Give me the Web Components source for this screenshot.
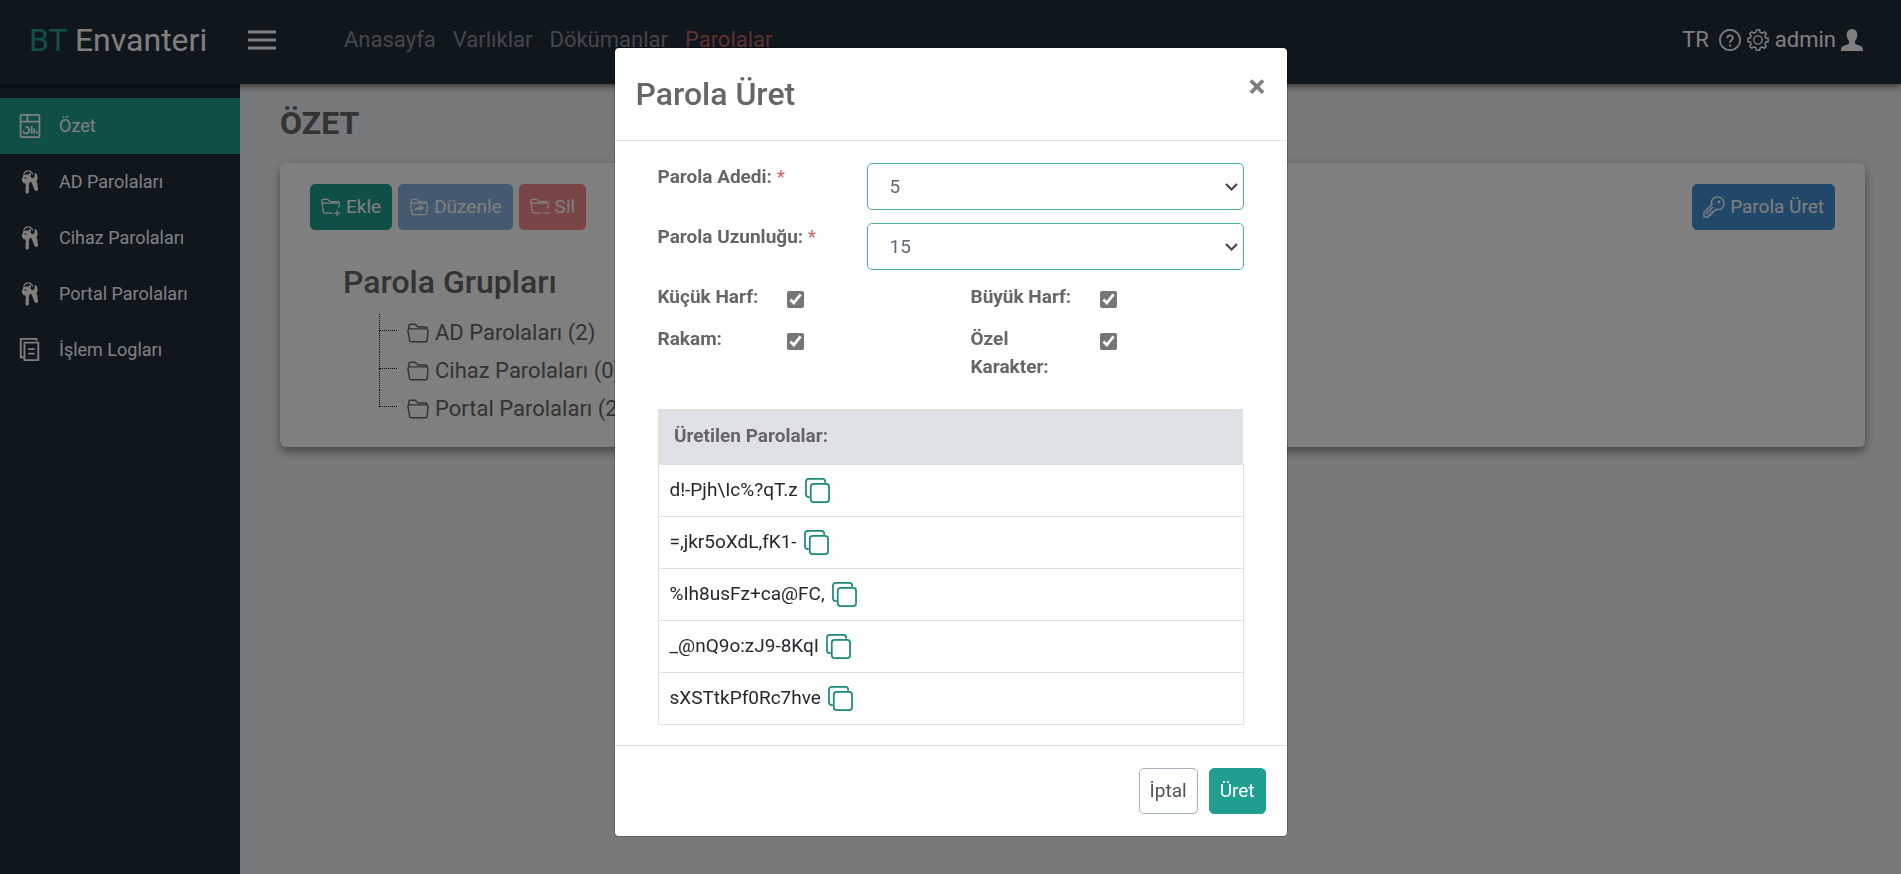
<!DOCTYPE html>
<html lang="tr">
<head>
<meta charset="utf-8">
<title>BT Envanteri</title>
<style>
    body {
        margin: 0;
        font-family: Roboto, "Liberation Sans", sans-serif;
        font-size: 18px;
        line-height: 28px;
        color: #666666;
        background-color: #f0f2f5;
        --green: #209f90;
        --dark: #1e2d38;
    }
</style>
</head>
<body>
<inventory-app></inventory-app>

<script>
// [viewBox, content]
const ICONS = {
    menu: ['0 0 28 20', '<path d="M0 2h28M0 10h28M0 18h28" stroke-width="3"/>'],
    dashboard: ['0 0 24 28', '<rect x="1" y="1" width="22" height="26" rx="1" stroke-width="2"/><path d="M1 9h22M9 1v8M4 20c1 4 7 3 7-1 0-2-1-4-4-4M14 14v9M17 17v6M20 20v3" stroke-width="2"/>'],
    keys: ['0 0 18 26', '<path d="M2 6C3 0 10-1 12 5" stroke-width="1.200"/><path fill="currentColor" stroke="none" fill-rule="evenodd" d="M4 5c3-1 6 2 6 5 0 2-1 4-2 5l-.5 3 1 1-1 1.500.5 3.500-2 2-2-2 .5-9C1 14-1 11 1 8c0-1 1-2 3-3zM4 7.500a1 1 0 1 0 1 1.500z"/><path fill="currentColor" stroke="none" d="M10 3v5l2 1 2-2V3c3 1 4 4 3 7l-1 2 1.500 4-.5 1 1 4-2 2-2-1-3-8-2-2-1 1c2-3 1-6-1-9z"/>'],
    log: ['0 0 22 26', '<path d="M4 21H1V1h17v2M5 5h15v19H5zM9 12h7M9 17h7" stroke-width="2"/>'],
    help: ['0 0 24 24', '<circle cx="12" cy="12" r="11" stroke-width="1.800"/><path d="M9 10c0-4 6-4 6 0 0 2-3 2-3 5M12 17v2" stroke-width="2"/>'],
    gear: ['0 0 24 24', '<circle cx="12" cy="12" r="4.500"/><path d="M10.300 1h3.400l.7 2.700 2.100.9L19 3.200 21 5l-1.500 2.500.9 2.100 2.700.7v3.400l-2.700.7-.9 2.100L21 19l-2 2-2.500-1.500-2.100.9-.7 2.700h-3.400l-.7-2.700-2.100-.9L5 21l-2-2 1.500-2.500-.9-2.100L1 13.700v-3.400l2.600-.7.9-2.100L3 5l2-2 2.500 1.500 2.100-.9z"/>'],
    user: ['0 0 22 22', '<path fill="currentColor" stroke="none" d="M11 0c4.500 0 6 4 5 8-.5 2-1 3-2 4v2c0 1 1 1.500 3 2 4 1 5 2 5 6H0c0-4 1-5 5-6 2-.5 3-1 3-2v-2c-1-1-1.500-2-2-4-1-4 .5-8 5-8z"/>'],
    folderAdd: ['0 0 26 24', '<path d="M15 20H5c-1.500 0-2-1-2-2L1 4c0-1 1-2 2-2h6l3 3h10c1 0 2 1 2 2l-1 6M2 7h20M21 16v8M17 20h8"/>'],
    folderMove: ['0 0 26 24', '<path d="M3 7V4c0-1 1-2 2-2h5l3 3h8c1 0 2 1 2 2v1M4 21L2 9c0-1 1-2 2-2h18c1 0 2 1 2 2l-1 11c0 1-1 2-2 2H6c-1 0-2 0-2-1z"/><path fill="currentColor" stroke="none" d="M14 9l6 4-6 5v-3c-4 0-6 1-7 3 0-4 3-6 7-6z"/>'],
    folderDel: ['0 0 26 24', '<path d="M14 20H5c-1.500 0-2-1-2-2L1 4c0-1 1-2 2-2h6l3 3h10c1 0 2 1 2 2l-1 7M2 7h20M17 20h8"/>'],
    folder: ['0 0 24 21', '<path d="M2 6V3c0-1 1-2 2-2h5l3 3h8c1 0 2 1 2 2M3 19L1 8c0-1 0-2 2-2h18c2 0 2 1 2 2l-1 10c0 1-1 2-2 2H5c-1 0-2 0-2-1z"/>'],
    key: ['0 0 24 24', '<path d="M1 23v-5L9.500 9.500C8 4 12 1 16 1c4 0 7 3 7 7 0 4-4 8-8.500 6.500L12 17h-2v2H8v2H6v2zM3 20l8-8"/><circle cx="17.500" cy="6.500" r="1.500" fill="currentColor" stroke="none"/>'],
    copy: ['0 0 26 26', '<path d="M5 20H4c-2 0-3-1-3-3V4c0-2 1-3 3-3h14c2 0 3 1 3 3v1" stroke-width="1.800"/><rect x="6" y="6" width="19" height="19" rx="3" stroke-width="1.800"/>'],
    arrow: ['0 0 13 13', '<path d="M1 4l5.500 5.500L12 4" stroke-width="2.200"/>']
};

class BaseElement extends HTMLElement {
    constructor() {
        super();
        this.attachShadow({ mode: 'open' });
    }

    connectedCallback() {
        this.shadowRoot.innerHTML = this.render();
    }
}

class UiIcon extends BaseElement {
    render() {
        const [box, content] = ICONS[this.getAttribute('name')];
        return `
            <style>
                :host { display: inline-flex; flex: none; width: 22px; height: 22px; }
                svg { width: 100%; height: 100%; fill: none; stroke: currentColor; stroke-width: 1.6; overflow: visible; }
            </style>
            <svg viewBox="${box}" aria-hidden="true">${content}</svg>
        `;
    }
}

class UiButton extends BaseElement {
    render() {
        return `
            <style>
                :host { display: inline-block; font-size: 19px; }
                button {
                    display: flex;
                    align-items: center;
                    gap: 5px;
                    height: 46px;
                    padding: 0 10px;
                    border: 1px solid var(--border, var(--bg));
                    border-radius: 5px;
                    background-color: var(--bg);
                    color: var(--text, #ffffff);
                    font: inherit;
                    cursor: pointer;
                }
            </style>
            <button type="button"><slot></slot></button>
        `;
    }
}

class AppHeader extends BaseElement {
    render() {
        return `
            <style>
                :host {
                    display: block;
                    position: relative;
                    z-index: 1;
                    background-color: var(--dark);
                    box-shadow: 0 3px 6px rgba(0, 0, 0, 0.5);
                    color: #ffffff;
                    font-size: 22px;
                }
                header { display: flex; align-items: center; height: 80px; padding: 0 38px 4px 29px; }
                a { color: inherit; text-decoration: none; }
                .brand { width: 219px; font-size: 32px; line-height: 40px; }
                .brand span { color: var(--green); }
                button { display: flex; width: 28px; padding: 0; border: none; background: none; color: inherit; cursor: pointer; }
                button ui-icon { width: 28px; height: 20px; }
                nav { display: flex; gap: 17px; flex: 1; margin-left: 68px; color: #8a8d90; }
                nav .active { color: #bd6060; }
                .tools { display: flex; align-items: center; gap: 6px; }
                .tools a { display: flex; align-items: center; gap: 5px; }
                .lang { margin-right: 4px; }
            </style>
            <header>
                <a class="brand" href="#"><span>BT</span> Envanteri</a>
                <button type="button" aria-label="Menü"><ui-icon name="menu"></ui-icon></button>
                <nav>
                    <a href="#">Anasayfa</a>
                    <a href="#">Varlıklar</a>
                    <a href="#">Dökümanlar</a>
                    <a href="#" class="active">Parolalar</a>
                </nav>
                <div class="tools">
                    <a class="lang" href="#">TR</a>
                    <a href="#" aria-label="Yardım"><ui-icon name="help"></ui-icon></a>
                    <a href="#" aria-label="Ayarlar"><ui-icon name="gear"></ui-icon></a>
                    <a href="#">admin <ui-icon name="user"></ui-icon></a>
                </div>
            </header>
        `;
    }
}

class MenuItem extends BaseElement {
    render() {
        return `
            <style>
                :host { display: block; }
                a {
                    display: flex;
                    align-items: center;
                    gap: 17px;
                    height: 56px;
                    padding-left: 18px;
                    color: #ffffff;
                    text-decoration: none;
                }
                ui-icon { width: 24px; height: 24px; }
                :host([active]) { background-color: var(--green); }
            </style>
            <a href="#"><ui-icon name="${this.getAttribute('icon')}"></ui-icon><slot></slot></a>
        `;
    }
}

class AppSidebar extends BaseElement {
    render() {
        return `
            <style>
                :host { display: block; width: 240px; background-color: var(--dark); }
                nav { padding-top: 14px; }
            </style>
            <nav><slot></slot></nav>
        `;
    }
}

class TreeNode extends BaseElement {
    render() {
        return `
            <style>
                :host { display: flex; height: 38px; font-size: 22px; }
                .branch { display: flex; flex-direction: column; width: 18px; margin-right: 10px; }
                .top { height: 16px; border-left: 1px dotted #000000; border-bottom: 1px dotted #000000; }
                .bottom { flex: 1; border-left: 1px dotted #000000; }
                :host(:last-child) .bottom { border: none; }
                a { display: flex; align-items: center; gap: 6px; color: inherit; text-decoration: none; white-space: nowrap; }
            </style>
            <div class="branch"><div class="top"></div><div class="bottom"></div></div>
            <a href="#"><ui-icon name="folder"></ui-icon><slot></slot></a>
        `;
    }
}

class GroupCard extends BaseElement {
    render() {
        return `
            <style>
                :host {
                    display: block;
                    padding: 21px 30px 19px;
                    border-radius: 6px;
                    background-color: #ffffff;
                    box-shadow: 0 5px 10px rgba(0, 0, 0, 0.4);
                }
                .toolbar { display: flex; gap: 6px; }
                .add { --bg: var(--green); }
                .edit { --bg: #8ab5e2; }
                .delete { --bg: #f28b8d; }
                .generate { --bg: #4490d2; margin-left: auto; }
                .toolbar ui-icon { width: 20px; height: 20px; }
                .toolbar .generate ui-icon { width: 22px; height: 22px; }
                .groups { padding: 32px 33px 0; }
                h2 { margin: 0 0 12px; font-size: 32px; line-height: 40px; font-weight: 500; }
                .tree { padding-left: 36px; }
            </style>
            <div class="toolbar">
                <ui-button class="add"><ui-icon name="folderAdd"></ui-icon>Ekle</ui-button>
                <ui-button class="edit"><ui-icon name="folderMove"></ui-icon>Düzenle</ui-button>
                <ui-button class="delete"><ui-icon name="folderDel"></ui-icon>Sil</ui-button>
                <ui-button class="generate"><ui-icon name="key"></ui-icon>Parola Üret</ui-button>
            </div>
            <div class="groups">
                <h2>Parola Grupları</h2>
                <div class="tree">
                    <tree-node>AD Parolaları (2)</tree-node>
                    <tree-node>Cihaz Parolaları (0)</tree-node>
                    <tree-node>Portal Parolaları (2)</tree-node>
                </div>
            </div>
        `;
    }
}

class PasswordDialog extends BaseElement {
    constructor() {
        super();
        this.passwords = ['d!-Pjh\\Ic%?qT.z', '=,jkr5oXdL,fK1-', '%Ih8usFz+ca@FC,', '_@nQ9o:zJ9-8KqI', 'sXSTtkPf0Rc7hve'];
        this.selects = [['count', 'Parola Adedi:', '5'], ['length', 'Parola Uzunluğu:', '15']];
        this.checks = [['lower', 'Küçük Harf:'], ['upper', 'Büyük Harf:'], ['digit', 'Rakam:'], ['special', 'Özel Karakter:']];
    }

    render() {
        return `
            <style>
                :host {
                    display: flex;
                    justify-content: center;
                    align-items: flex-start;
                    position: fixed;
                    inset: 0;
                    z-index: 10;
                    padding-top: 47px;
                    background-color: rgba(0, 0, 0, 0.5);
                    font-size: 19px;
                }
                .modal {
                    box-sizing: border-box;
                    width: 674px;
                    border: 1px solid rgba(0, 0, 0, 0.2);
                    border-radius: 5px;
                    background-color: #ffffff;
                    background-clip: padding-box;
                }
                .head {
                    display: flex;
                    justify-content: space-between;
                    align-items: flex-start;
                    padding: 26px 21px;
                    border-bottom: 1px solid #dee2e6;
                }
                h2 { margin: 0; font-size: 32px; line-height: 40px; font-weight: 500; }
                .close {
                    padding: 0;
                    border: none;
                    background: none;
                    color: #7f7f7f;
                    font: inherit;
                    font-size: 32px;
                    font-weight: 700;
                    line-height: 24px;
                    cursor: pointer;
                }
                .body { padding: 22px 43px 20px; }
                .field { display: grid; grid-template-columns: 209px 1fr; margin-bottom: 13px; }
                label { font-weight: 700; }
                .required { color: #d06060; font-weight: 400; }
                .select { display: grid; align-items: center; color: #5c6873; }
                .select > * { grid-area: 1 / 1; }
                .select ui-icon { width: 13px; height: 13px; margin-right: 6px; justify-self: end; color: #42484e; pointer-events: none; }
                select {
                    appearance: none;
                    box-sizing: border-box;
                    width: 100%;
                    height: 47px;
                    padding: 0 22px;
                    border: 1px solid #4bb2a6;
                    border-radius: 5px;
                    background-color: #ffffff;
                    color: inherit;
                    font: inherit;
                }
                .checks { display: grid; grid-template-columns: 1fr 1fr; gap: 14px 40px; margin-bottom: 28px; }
                .check { display: grid; grid-template-columns: 129px 1fr; align-items: start; }
                .check label { padding-right: 28px; }
                input { width: 17px; height: 17px; margin: 8px 0 0; accent-color: #767676; }
                table { width: 100%; border-collapse: collapse; color: #23282c; }
                th {
                    height: 55px;
                    padding: 0 16px;
                    box-sizing: border-box;
                    background-color: #dee1e6;
                    color: #666666;
                    text-align: left;
                    font-weight: 700;
                }
                td { padding: 0 11px; border: 1px solid #dee1e6; }
                .password { display: flex; align-items: center; gap: 7px; height: 51px; }
                .copy { display: flex; padding: 0; border: none; background: none; color: #1b897c; cursor: pointer; }
                .copy ui-icon { width: 25px; height: 25px; }
                .foot {
                    display: flex;
                    justify-content: flex-end;
                    gap: 11px;
                    padding: 22px 21px;
                    border-top: 1px solid #dee1e6;
                }
                .cancel { --bg: #ffffff; --border: #a4b0bc; --text: #4f5257; }
                .submit { --bg: var(--green); }
            </style>
            <div class="modal" role="dialog" aria-labelledby="title">
                <div class="head">
                    <h2 id="title">Parola Üret</h2>
                    <button class="close" type="button" aria-label="Kapat">×</button>
                </div>
                <div class="body">
                    ${this.selects.map(([id, text, value]) => `
                        <div class="field">
                            <label for="${id}">${text} <span class="required">*</span></label>
                            <div class="select">
                                <select id="${id}"><option>${value}</option></select>
                                <ui-icon name="arrow"></ui-icon>
                            </div>
                        </div>
                    `).join('')}
                    <div class="checks">
                        ${this.checks.map(([id, text]) => `
                            <div class="check">
                                <label for="${id}">${text}</label>
                                <input type="checkbox" id="${id}" checked>
                            </div>
                        `).join('')}
                    </div>
                    <table>
                        <thead><tr><th>Üretilen Parolalar:</th></tr></thead>
                        <tbody>
                            ${this.passwords.map(password => `
                                <tr><td><div class="password">
                                    <span>${password}</span>
                                    <button class="copy" type="button" aria-label="Kopyala"><ui-icon name="copy"></ui-icon></button>
                                </div></td></tr>
                            `).join('')}
                        </tbody>
                    </table>
                </div>
                <div class="foot">
                    <ui-button class="cancel">İptal</ui-button>
                    <ui-button class="submit">Üret</ui-button>
                </div>
            </div>
        `;
    }
}

class InventoryApp extends BaseElement {
    render() {
        return `
            <style>
                :host { display: flex; flex-direction: column; min-height: 100vh; }
                .page { display: flex; flex: 1; }
                main { flex: 1; padding: 19px 36px 19px 40px; }
                h1 { margin: 0 0 20px; font-size: 32px; line-height: 40px; font-weight: 700; }
            </style>
            <app-header></app-header>
            <div class="page">
                <app-sidebar>
                    <menu-item icon="dashboard" active>Özet</menu-item>
                    <menu-item icon="keys">AD Parolaları</menu-item>
                    <menu-item icon="keys">Cihaz Parolaları</menu-item>
                    <menu-item icon="keys">Portal Parolaları</menu-item>
                    <menu-item icon="log">İşlem Logları</menu-item>
                </app-sidebar>
                <main>
                    <h1>ÖZET</h1>
                    <group-card></group-card>
                </main>
            </div>
            <password-dialog></password-dialog>
        `;
    }
}

customElements.define('ui-icon', UiIcon);
customElements.define('ui-button', UiButton);
customElements.define('app-header', AppHeader);
customElements.define('menu-item', MenuItem);
customElements.define('app-sidebar', AppSidebar);
customElements.define('tree-node', TreeNode);
customElements.define('group-card', GroupCard);
customElements.define('password-dialog', PasswordDialog);
customElements.define('inventory-app', InventoryApp);
</script>
</body>
</html>
